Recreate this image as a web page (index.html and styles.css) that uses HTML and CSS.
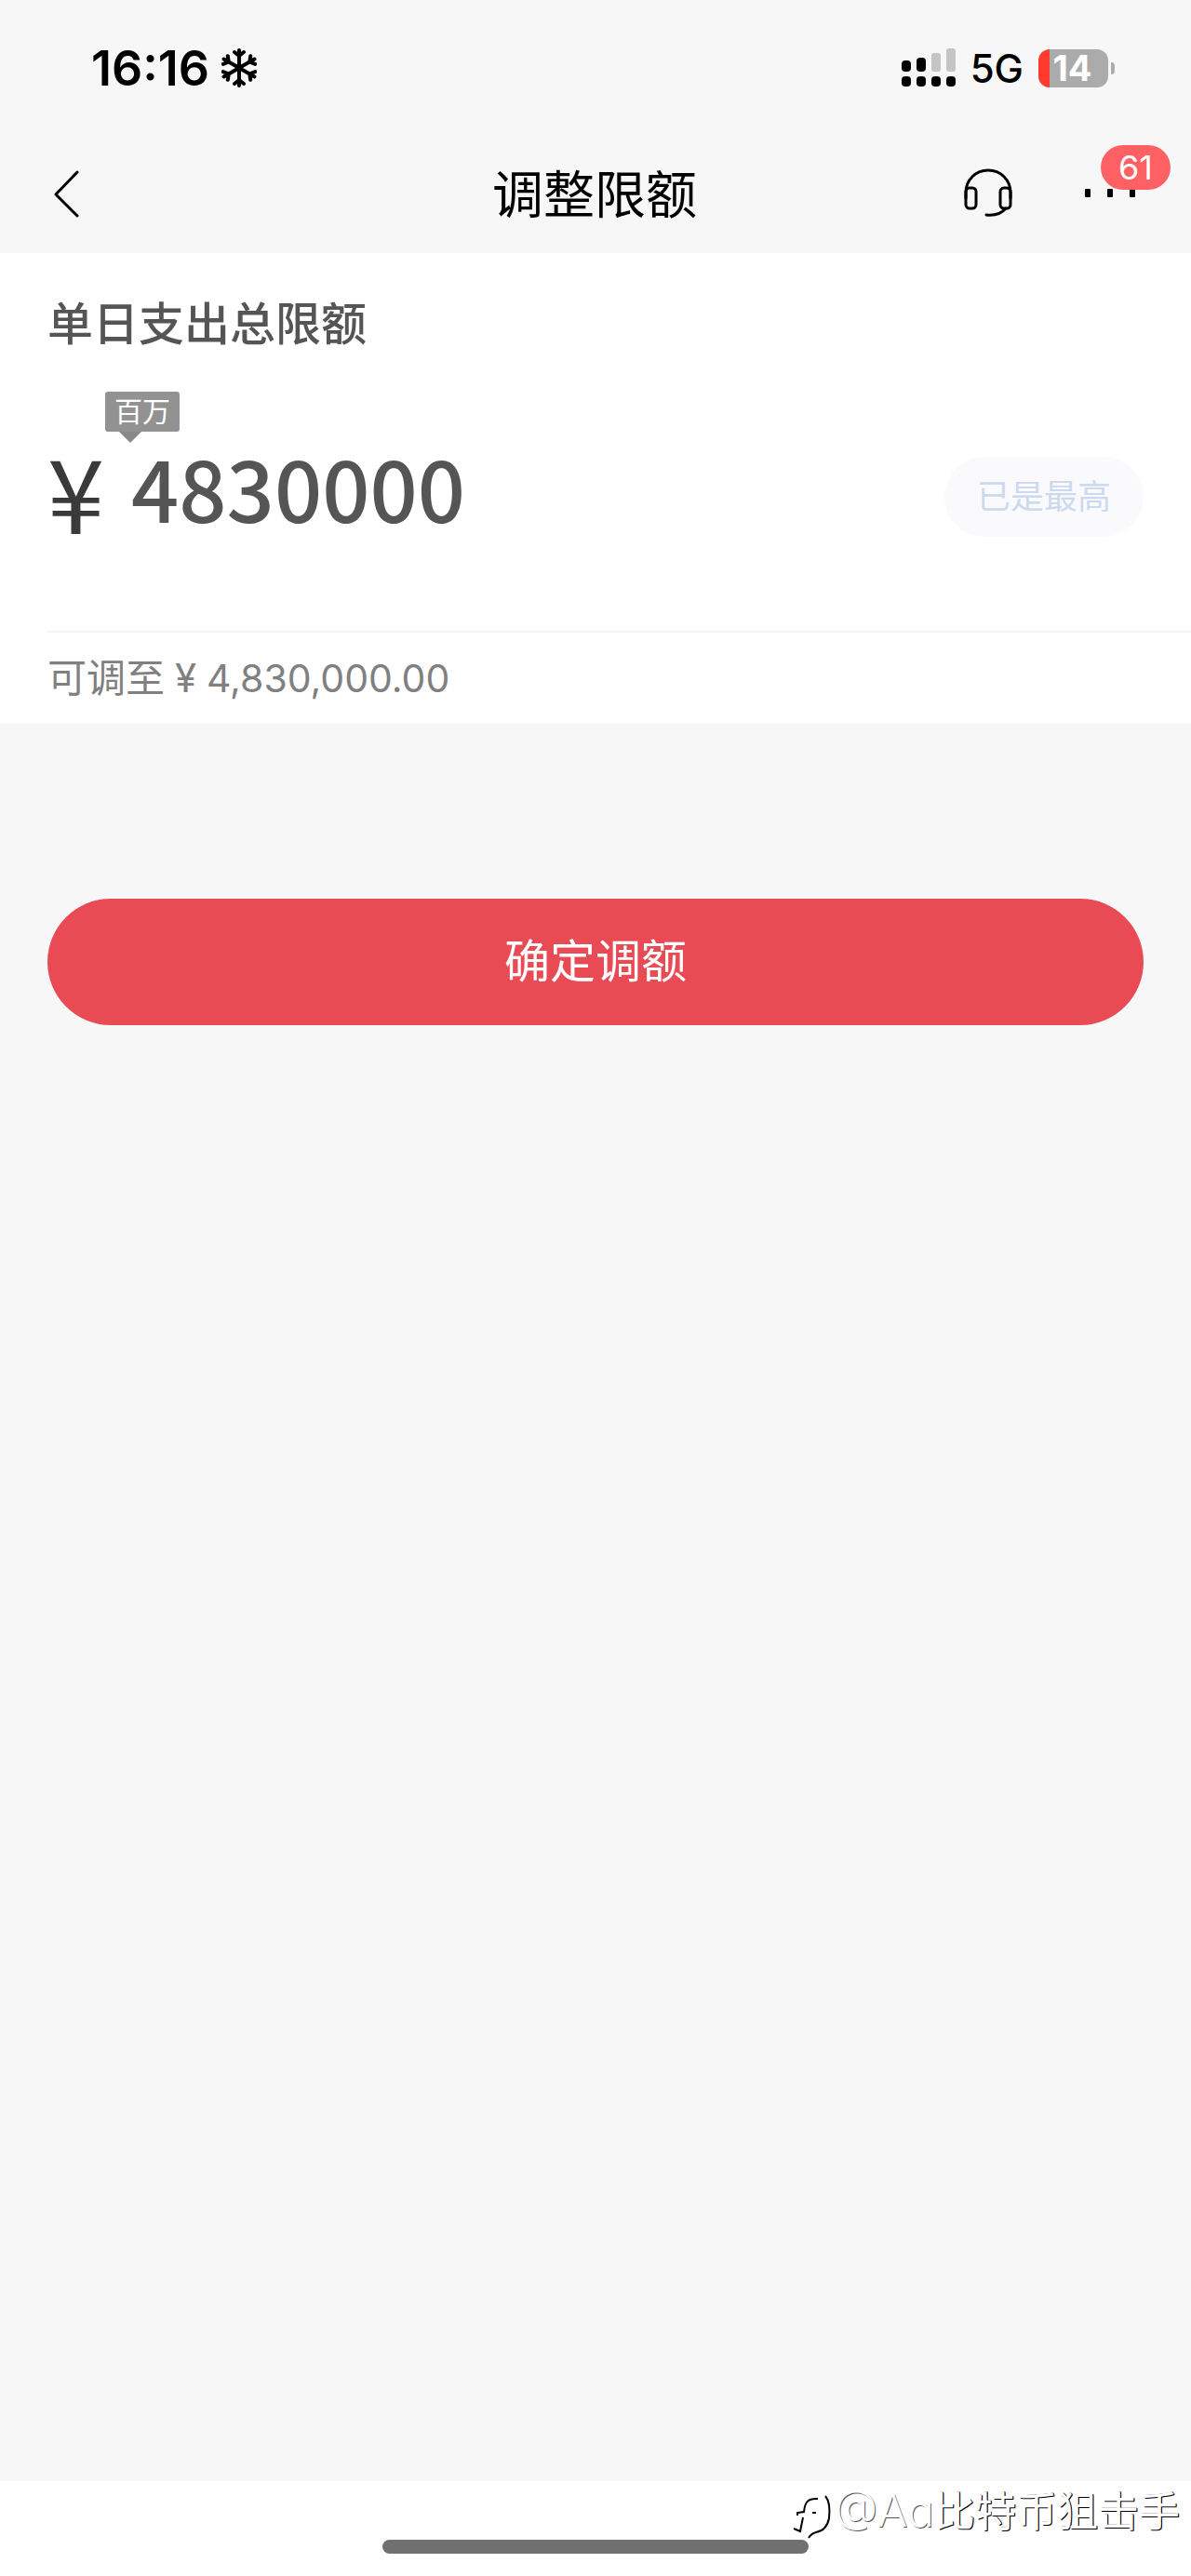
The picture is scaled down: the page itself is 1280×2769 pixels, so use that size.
FILE: index.html
```html
<!doctype html>
<html lang="zh-CN">
<head>
	<meta charset="utf-8">
	<meta name="viewport" content="width=device-width, initial-scale=1.0">

	<title>调整限额</title>

	<link rel="stylesheet" href="styles.css">
</head>
<body>
	<div class="status-bar">
		<div class="status-left">
			<span class="clock">16:16</span>
			<svg class="snow" viewBox="0 0 38 42">
				<g id="arm">
					<path d="M19 21V2M14 4l5 4 5-4"></path>
				</g>
				<use href="#arm" transform="rotate(60 19 21)"></use>
				<use href="#arm" transform="rotate(120 19 21)"></use>
				<use href="#arm" transform="rotate(180 19 21)"></use>
				<use href="#arm" transform="rotate(240 19 21)"></use>
				<use href="#arm" transform="rotate(300 19 21)"></use>
			</svg>
		</div>
		<div class="status-right">
			<svg class="signal" viewBox="0 0 58 42">
				<g fill="#c4c4c4">
					<rect x="32" y="5" width="10" height="20" rx="3"></rect>
					<rect x="48" y="0" width="10" height="25" rx="3"></rect>
				</g>
				<rect x="0" y="13" width="10" height="12" rx="4"></rect>
				<rect x="16" y="10" width="10" height="15" rx="4"></rect>
				<rect x="0" y="30" width="10" height="11" rx="4"></rect>
				<rect x="16" y="30" width="10" height="11" rx="4"></rect>
				<rect x="32" y="30" width="10" height="11" rx="4"></rect>
				<rect x="48" y="30" width="10" height="11" rx="4"></rect>
			</svg>
			<span class="network">5G</span>
			<div class="battery"><span class="battery-body">14</span><span class="battery-tip"></span></div>
		</div>
	</div>

	<header class="nav-bar">
		<button class="icon-btn back" type="button" aria-label="返回">
			<svg width="28" height="52" viewBox="0 0 28 52">
				<path d="M25 2L2 26l23 23" fill="none" stroke="#000" stroke-width="3" stroke-linecap="round" stroke-linejoin="round"></path>
			</svg>
		</button>
		<h1>调整限额</h1>
		<div class="nav-actions">
			<button class="icon-btn" type="button" aria-label="客服">
				<svg width="52" height="52" viewBox="0 0 52 52" fill="none" stroke="#000" stroke-width="3" stroke-linecap="round">
					<path d="M2 32V26C2 12 13 2 26 2s24 10 24 24v6"></path>
					<rect x="2" y="21" width="11" height="22" rx="4"></rect>
					<rect x="39" y="21" width="11" height="22" rx="4"></rect>
					<path d="M45 43c-5 6-11 8-21 7"></path>
				</svg>
			</button>
			<button class="icon-btn more" type="button" aria-label="更多">
				<svg width="54" height="9" viewBox="0 0 54 9">
					<rect x="0" y="0" width="6" height="9" rx="1"></rect>
					<rect x="24" y="0" width="6" height="9" rx="1"></rect>
					<rect x="48" y="0" width="6" height="9" rx="1"></rect>
				</svg>
				<span class="badge">61</span>
			</button>
		</div>
	</header>

	<main>
		<section class="card">
			<h2>单日支出总限额</h2>
			<div class="amount-row">
				<label class="yen" for="amount">¥</label>
				<div class="amount-field">
					<span class="unit-tag">百万</span>
					<input id="amount" type="text" inputmode="numeric" value="4830000">
				</div>
				<button class="max-btn" type="button" disabled>已是最高</button>
			</div>
			<p class="hint">可调至<span class="hint-yen">¥</span><span class="hint-amount">4,830,000.00</span></p>
		</section>

		<button class="submit-btn" type="button">确定调额</button>
	</main>

	<footer>
		<div class="home-bar"></div>
		<div class="watermark">
			<svg width="42" height="48" viewBox="0 0 42 48" fill="none" stroke="#000">
				<path d="M27 5C16 4 13 9 12 19L5 20v3" stroke-width="2"></path>
				<path d="M11 25L8 40l-7-3" stroke-width="2"></path>
				<path d="M21 20h4" stroke-width="2"></path>
				<path d="M35 2c5 6 5 15 4 24-2 10-8 14-14 15-4 1-6 3-8 6" stroke-width="2"></path>
			</svg>
			<span><span class="latin">@Aa</span>比特币狙击手</span>
		</div>
	</footer>
</body>
</html>
```

FILE: styles.css
```css
* {
	box-sizing: border-box;
}

body {
	display: flex;
	flex-direction: column;
	min-height: 100vh;
	margin: 0;
	background-color: #f7f7f7;
	color: #000;
	font-family: Inter, "Noto Sans CJK SC", sans-serif;
}

button {
	padding: 0;
	border: 0;
	background: none;
	font-family: inherit;
	cursor: pointer;
}

svg {
	display: block;
}

h1,
h2,
p {
	margin: 0;
}

.status-bar {
	display: flex;
	align-items: center;
	justify-content: space-between;
	height: 146px;
	padding: 0 82px 0 98px;
}

.status-left,
.status-right {
	display: flex;
	align-items: center;
}

.status-left {
	gap: 13px;
}

.status-right {
	gap: 16px;
}

.clock {
	font-size: 52px;
	font-weight: 600;
}

.snow {
	width: 38px;
	height: 42px;
	fill: none;
	stroke: #000;
	stroke-width: 4;
	stroke-linecap: round;
}

.signal {
	width: 58px;
	height: 42px;
}

.network {
	font-size: 42px;
	font-weight: 500;
}

.battery {
	display: flex;
	align-items: center;
	gap: 3px;
}

.battery-body {
	width: 75px;
	padding-right: 2px;
	border-radius: 12px;
	background: linear-gradient(to right, #ff3b30 12px, #ababab 12px);
	color: #fff;
	font-size: 38px;
	font-weight: 700;
	line-height: 41px;
	text-align: center;
}

.battery-tip {
	width: 4px;
	height: 13px;
	border-radius: 0 6px 6px 0;
	background-color: #ababab;
}

.nav-bar {
	display: grid;
	grid-template-columns: 1fr auto 1fr;
	align-items: center;
	height: 126px;
	padding: 0 60px 0 58px;
}

.nav-bar h1 {
	font-size: 55px;
	font-weight: 400;
	line-height: 80px;
}

.back {
	justify-self: start;
}

.nav-actions {
	display: flex;
	align-items: center;
	justify-content: flex-end;
	gap: 78px;
}

.nav-actions svg {
	margin-bottom: 4px;
}

.more {
	position: relative;
}

.badge {
	position: absolute;
	bottom: 12px;
	left: 17px;
	width: 75px;
	border-radius: 24px;
	background-color: #ff6063;
	color: #fff;
	font-size: 36px;
	line-height: 48px;
}

.card {
	padding: 41px 0 0 51px;
	background-color: #fff;
}

.card h2 {
	color: #555;
	font-size: 49px;
	font-weight: 500;
	line-height: 72px;
}

.amount-row {
	display: flex;
	align-items: center;
	height: 295px;
	padding-right: 51px;
	border-bottom: 2px solid #f3f3f3;
}

.yen {
	width: 90px;
	padding-bottom: 12px;
	color: #3a3a3a;
	font-family: "Noto Sans CJK SC", sans-serif;
	font-size: 110px;
	line-height: 120px;
}

.amount-field {
	position: relative;
	flex: 1;
}

.amount-field input {
	display: block;
	width: 100%;
	height: 120px;
	padding: 0 0 18px;
	border: 0;
	outline: 0;
	background: none;
	color: #555;
	font-family: "Noto Sans CJK SC", sans-serif;
	font-size: 90px;
	font-weight: 500;
}

.unit-tag {
	position: absolute;
	bottom: 128px;
	left: -28px;
	width: 80px;
	border-radius: 3px;
	background-color: #929292;
	color: #fff;
	font-size: 30px;
	line-height: 43px;
	text-align: center;
}

.unit-tag::after {
	content: "";
	position: absolute;
	top: 100%;
	left: 15px;
	border: 12px solid transparent;
	border-top-color: #888;
	border-bottom: 0;
}

.max-btn {
	width: 214px;
	margin-top: 4px;
	border-radius: 43px;
	background-color: #fafafc;
	color: #ccd9ee;
	font-size: 36px;
	line-height: 86px;
}

.hint {
	color: #808080;
	font-size: 42px;
	line-height: 98px;
}

.hint-yen {
	display: inline-block;
	width: 45px;
	text-align: center;
}

.hint-amount {
	font-size: 41px;
}

.submit-btn {
	display: block;
	width: calc(100% - 102px);
	margin: 188px 51px 0;
	border-radius: 68px;
	background-color: #e94b55;
	color: #fff;
	font-size: 49px;
	line-height: 136px;
}

footer {
	position: relative;
	display: flex;
	align-items: flex-end;
	justify-content: center;
	height: 102px;
	margin-top: auto;
	padding-bottom: 24px;
	background-color: #fff;
}

.home-bar {
	width: 458px;
	height: 15px;
	border-radius: 8px;
	background-color: #707070;
}

.watermark {
	position: absolute;
	top: 0;
	right: 12px;
	display: flex;
	align-items: center;
	gap: 2px;
	color: #fff;
	font-family: "Noto Sans CJK SC", sans-serif;
	font-size: 44px;
	line-height: 56px;
	text-shadow: 1px 1px 0 #000, 1px 0 0 #000;
}

.watermark svg {
	margin-top: 14px;
}

.latin {
	font-family: Inter, sans-serif;
	font-size: 48px;
	font-weight: 300;
	font-feature-settings: "cv11";
	text-shadow: 1px 1px 0 #555;
}
```
